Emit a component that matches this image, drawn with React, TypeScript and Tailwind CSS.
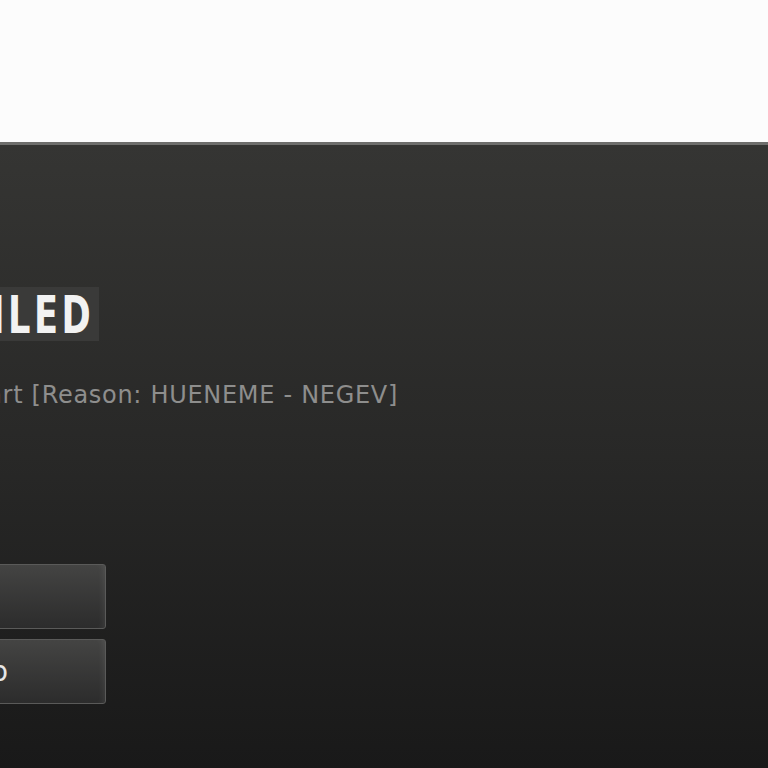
export default function App() {
  return (
    <div className="w-[768px] h-[768px] overflow-hidden flex flex-col bg-[#fcfcfc]">
      <div className="h-[142px] shrink-0 bg-[#fcfcfc]" />
      <div className="flex-1 flex flex-col overflow-hidden border-t-[3px] border-[#6e6e6c] bg-gradient-to-b from-[#353533] via-[#282827] to-[#191919]">
        <div className="mt-[142px] w-[99px] flex justify-end">
          <div className="shrink-0 w-[220px] h-[54px] flex items-center justify-end pr-[9px] bg-[#3a3a39]">
            <span className="inline-block origin-right scale-x-[0.69] whitespace-nowrap text-[51px] font-bold leading-none text-[#f2f2f2] tracking-[5px] mr-[-4px] pt-[3px] [font-family:'DejaVu_Sans',sans-serif]">
              FAILED
            </span>
          </div>
        </div>
        <div className="mt-[38px] w-[398px] flex justify-end">
          <div className="shrink-0 whitespace-nowrap text-[24px] leading-[32px] tracking-[0.7px] text-[#8e8e8d] [font-family:'DejaVu_Sans',sans-serif]">
            Failed to start [Reason: HUENEME - NEGEV]
          </div>
        </div>
        <div className="mt-[153px] w-[106px] flex flex-col items-end gap-[10px]">
          <div className="shrink-0 w-[420px] h-[65px] flex items-center justify-end pr-[150px] rounded-[3px] border border-[#5a5a59] bg-gradient-to-b from-[#444443] to-[#2c2c2c] shadow-[inset_-6px_0_6px_-4px_rgba(255,255,255,0.08)] whitespace-nowrap text-[28px] text-[#e6e6e6] [font-family:'DejaVu_Sans',sans-serif]">
            Find Match
          </div>
          <div className="shrink-0 w-[420px] h-[65px] flex items-center justify-end pr-[97px] rounded-[3px] border border-[#5a5a59] bg-gradient-to-b from-[#444443] to-[#2c2c2c] shadow-[inset_-6px_0_6px_-4px_rgba(255,255,255,0.08)] whitespace-nowrap text-[28px] text-[#e6e6e6] [font-family:'DejaVu_Sans',sans-serif]">
            Quit to Desktop
          </div>
        </div>
      </div>
    </div>
  );
}
